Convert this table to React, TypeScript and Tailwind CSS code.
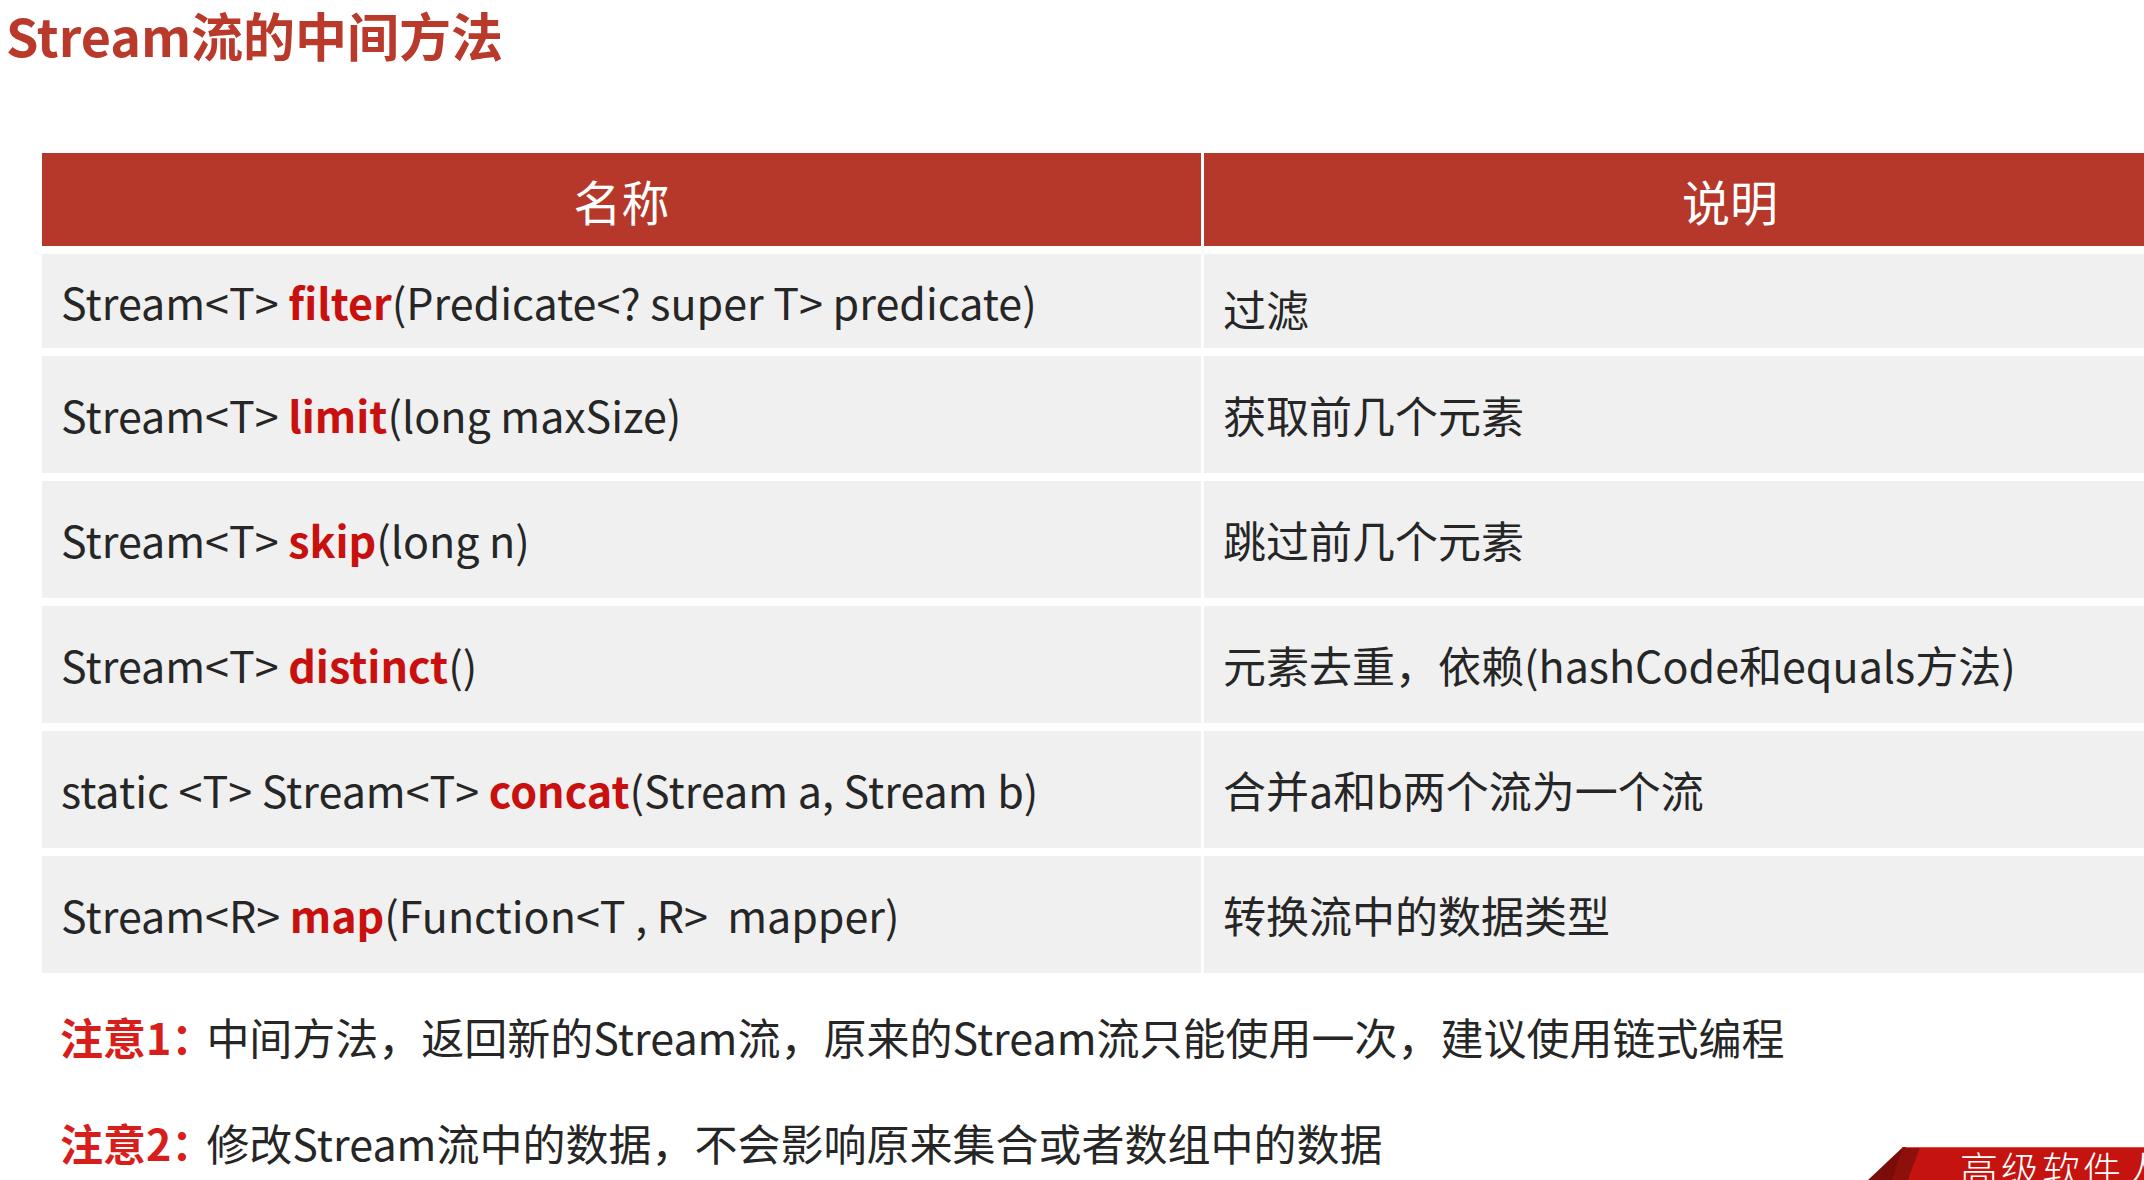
import React from 'react';

type Row = {
  pre: string;
  name: string;
  args: string;
  desc: string;
  descClass?: string;
};

const rows: Row[] = [
  { pre: 'Stream<T> ', name: 'filter', args: '(Predicate<? super T> predicate)', desc: '过滤', descClass: 'pt-[14px]' },
  { pre: 'Stream<T> ', name: 'limit', args: '(long maxSize)', desc: '获取前几个元素' },
  { pre: 'Stream<T> ', name: 'skip', args: '(long n)', desc: '跳过前几个元素' },
  { pre: 'Stream<T> ', name: 'distinct', args: '()', desc: '元素去重，依赖(hashCode和equals方法)' },
  { pre: 'static <T> Stream<T> ', name: 'concat', args: '(Stream a, Stream b)', desc: '合并a和b两个流为一个流' },
  { pre: 'Stream<R> ', name: 'map', args: '(Function<T , R>  mapper)', desc: '转换流中的数据类型' },
];

const Banner = () => (
  <div className="absolute right-0 bottom-0 w-[276px] h-[33px] overflow-hidden">
    <svg width="276" height="33" viewBox="0 0 276 33" className="absolute inset-0">
      <polygon points="0,33 35,0 52,0 40,33" fill="#7a0d0a" />
      <polygon points="38,0 276,0 276,33 26,33" fill="#c5140f" />
      <polygon points="35,0 52,0 40,33 24,33" fill="#8e100c" />
      <line x1="38" y1="0.5" x2="276" y2="0.5" stroke="#e0504a" strokeWidth="1" />
    </svg>
    <div className="absolute left-[92px] top-[2px] text-white text-[38px] leading-[38px] tracking-[3px] whitespace-nowrap font-light">
      高级软件人才
    </div>
  </div>
);

export default function App() {
  return (
    <div className="relative w-full h-[1180px] overflow-hidden bg-white font-['Noto_Sans_CJK_SC','Noto_Sans',sans-serif]">
      <h1 className="pl-[6px] text-[52px] leading-[70px] font-bold text-[#b9392a]">Stream流的中间方法</h1>

      {/* table */}
      <div className="mt-[83px] ml-[42px] grid grid-cols-[1159px_1052px] gap-x-[3px] gap-y-[8px] w-[2214px]">
        <div className="h-[93px] bg-[#b5382a] flex items-center justify-center text-white text-[48px]">名称</div>
        <div className="h-[93px] bg-[#b5382a] flex items-center justify-center text-white text-[48px]">说明</div>
        {rows.map((r, i) => (
          <React.Fragment key={i}>
            <div className={`${i === 0 ? 'h-[94px]' : 'h-[117px]'} bg-[#f0f0f0] flex items-center pl-[19px] text-[43px] text-[#262626] whitespace-pre`}>
              <span>{r.pre}</span>
              <span className="font-bold text-[#c8100e]">{r.name}</span>
              <span>{r.args}</span>
            </div>
            <div className={`${i === 0 ? 'h-[94px]' : 'h-[117px]'} bg-[#f0f0f0] flex items-center pl-[19px] text-[43px] text-[#262626] whitespace-nowrap ${r.descClass || ''}`}>
              {r.desc}
            </div>
          </React.Fragment>
        ))}
      </div>

      {/* notes */}
      <div className="mt-[33px] pl-[60px] flex flex-col gap-[46px] text-[43px] leading-[60px] text-[#262626]">
        <p>
          <span className="font-bold text-[#d81e1a] mr-[-8px]">注意1：</span>中间方法，返回新的Stream流，原来的Stream流只能使用一次，建议使用链式编程
        </p>
        <p>
          <span className="font-bold text-[#d81e1a] mr-[-8px]">注意2：</span>修改Stream流中的数据，不会影响原来集合或者数组中的数据
        </p>
      </div>

      <Banner />
    </div>
  );
}
